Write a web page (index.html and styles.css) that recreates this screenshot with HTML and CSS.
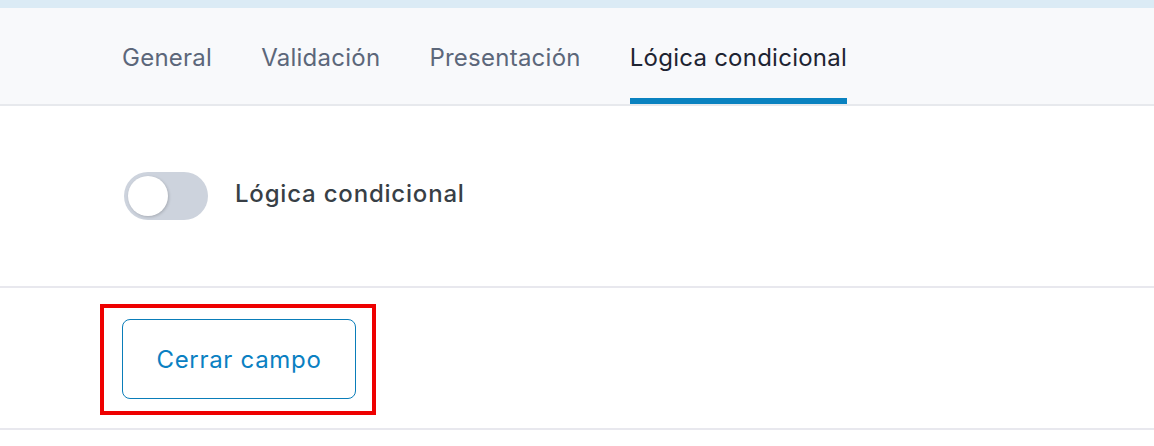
FILE: index.html
```html
<!DOCTYPE html>
<html lang="es">
<head>
<meta charset="utf-8">
<link rel="stylesheet" href="styles.css">
</head>
<body>
<div class="topband"></div>
<nav class="tabs">
  <a class="tab">General</a>
  <a class="tab">Validación</a>
  <a class="tab">Presentación</a>
  <a class="tab active">Lógica condicional</a>
</nav>
<section class="panel">
  <div class="toggle-row">
    <span class="switch"><span class="knob"></span></span>
    <span class="toggle-label">Lógica condicional</span>
  </div>
</section>
<section class="footer">
  <div class="highlight">
    <button class="btn-close">Cerrar campo</button>
  </div>
</section>
</body>
</html>
```

FILE: styles.css
```css
html, body {
  margin: 0;
  padding: 0;
  background: #ffffff;
  font-family: Inter, "Noto Sans", sans-serif;
}
.topband {
  height: 8px;
  background: #dbebf5;
}
.tabs {
  display: flex;
  gap: 49px;
  height: 96px;
  padding-left: 122px;
  background: #f8f9fb;
  border-bottom: 2px solid #e7e9ed;
}
.tab {
  display: flex;
  align-items: center;
  padding-top: 22px;
  padding-bottom: 14px;
  box-sizing: border-box;
  border-bottom: 6px solid transparent;
  font-size: 24px;
  color: #5c677a;
  letter-spacing: 0.25px;
}
.tab.active {
  color: #1e2432;
  border-bottom-color: #0a82c0;
}
.panel {
  height: 180px;
  display: flex;
  align-items: center;
  padding-left: 124px;
  border-bottom: 2px solid #e8e8ee;
}
.toggle-row {
  display: flex;
  align-items: center;
  gap: 27px;
}
.switch {
  width: 84px;
  height: 48px;
  border-radius: 24px;
  background: #cdd3dd;
  display: flex;
  align-items: center;
  padding-left: 4px;
  box-sizing: border-box;
}
.knob {
  width: 40px;
  height: 40px;
  border-radius: 50%;
  background: #ffffff;
  box-shadow: 1px 1px 3px rgba(0, 0, 0, 0.18);
}
.toggle-label {
  font-size: 24px;
  font-weight: 500;
  color: #383f46;
  letter-spacing: 0.8px;
  margin-top: -6px;
}
.footer {
  height: 142px;
  padding-left: 100px;
  padding-top: 16px;
  box-sizing: border-box;
  border-bottom: 2px solid #e8e8ee;
}
.highlight {
  display: inline-block;
  border: 4px solid #ee0000;
  padding: 11px 16px 12px 18px;
}
.btn-close {
  display: block;
  width: 234px;
  height: 80px;
  padding: 0;
  background: #ffffff;
  border: 1.5px solid #0a7db9;
  border-radius: 8px;
  font-family: Inter, "Noto Sans", sans-serif;
  font-size: 24px;
  letter-spacing: 0.7px;
  color: #0a80c2;
  cursor: pointer;
}
```
